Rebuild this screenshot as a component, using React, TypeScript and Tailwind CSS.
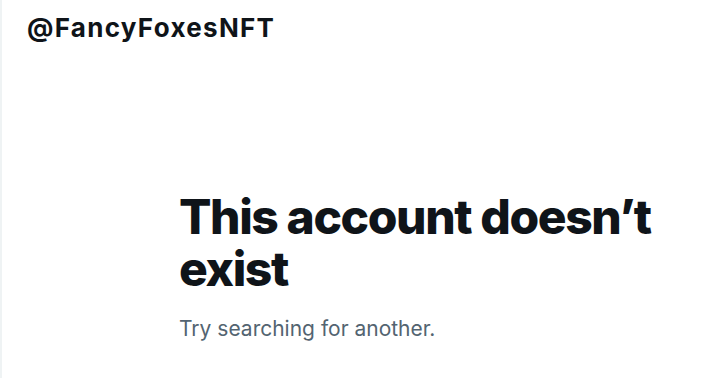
export default function App() {
  return (
    <div
      className="h-[378px] w-[726px] overflow-hidden bg-white border-l-2 border-[#eff3f4] text-[#0f1419]"
      style={{ fontFamily: "Inter, 'Liberation Sans', sans-serif" }}
    >
      <div className="pl-[25px] pt-[12px]">
        <h2 className="text-[26px] font-bold leading-[32px] tracking-[1.3px]">@FancyFoxesNFT</h2>
      </div>
      <div className="pl-[177px] pt-[147px]">
        <h1 className="text-[48px] font-extrabold leading-[52px] tracking-[-1.4px]">
          This account doesn’t exist
        </h1>
        <p className="mt-[22px] text-[21px] leading-[24px] text-[#536471]">
          Try searching for another.
        </p>
      </div>
    </div>
  );
}
